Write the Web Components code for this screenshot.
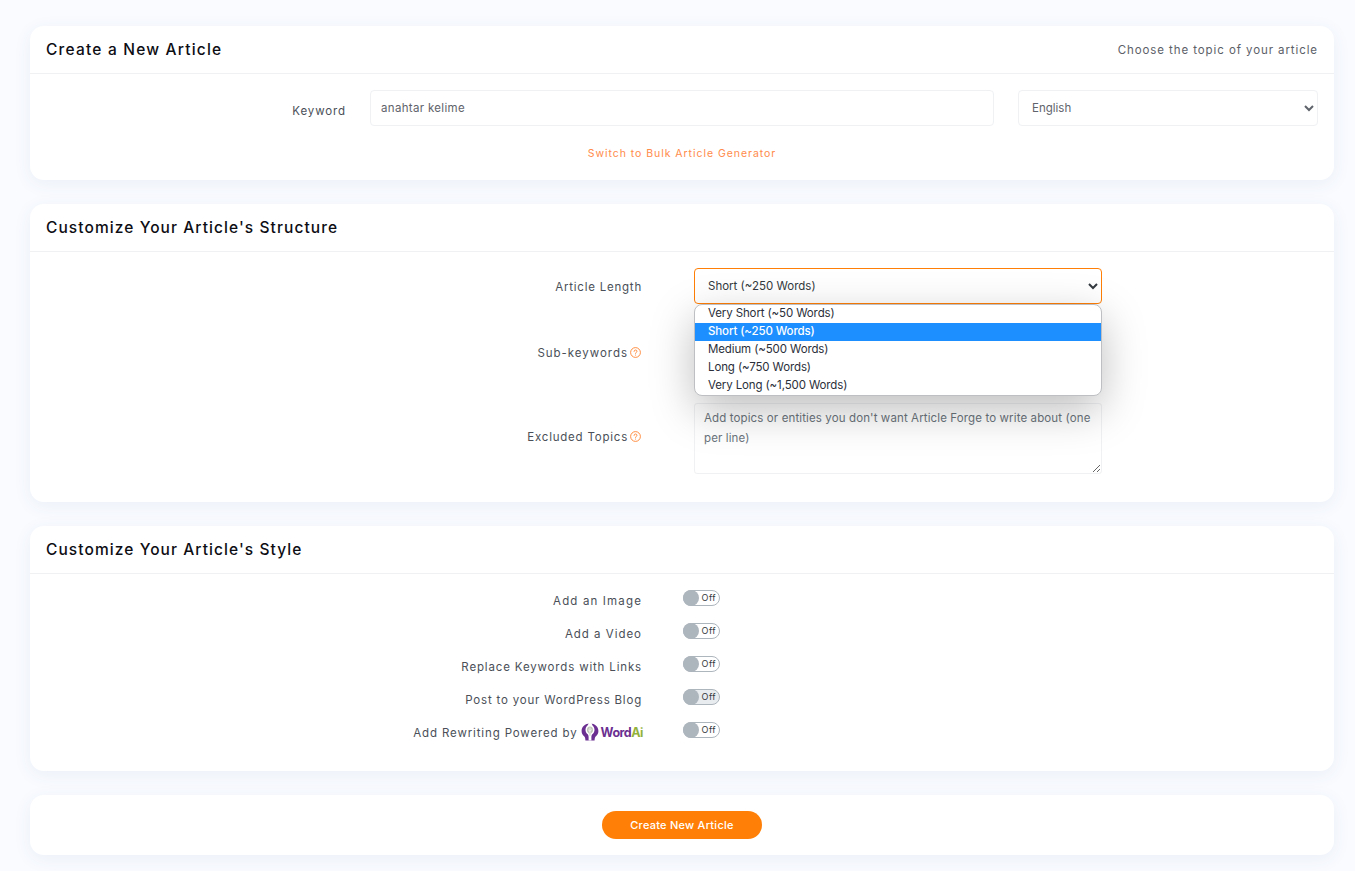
<!DOCTYPE html>
<html><head><meta charset="utf-8">
<style>
html,body{margin:0;padding:0;background:#f9fbff;}
body{font-family:"Inter","Open Sans",sans-serif;color:#343a40;height:871px;overflow:hidden;}
</style></head>
<body>
<template id="t-page"><style>
:host{display:flex;flex-direction:column;gap:24px;padding:26px 21px 0 30px;}
</style><slot></slot></template>

<template id="t-card"><style>
:host{display:block;background:#fff;border-radius:14px;box-shadow:0 4px 18px rgba(60,80,130,.07);position:relative;}
header{display:flex;justify-content:space-between;align-items:center;height:47px;padding:0 16px;border-bottom:1px solid #eff1f3;}
h2{margin:0;font:500 15.5px/20px "Inter",sans-serif;letter-spacing:var(--h-ls,1.08px);color:#0d0d14;}
.sub{font:400 11.5px/16px "Inter",sans-serif;letter-spacing:.91px;color:#5c6068;}
.sub:empty{display:none}
.body{padding:16px;}
</style><header><h2></h2><span class="sub"></span></header><div class="body"><slot></slot></div></template>

<template id="t-plain"><style>
:host{display:flex;justify-content:center;align-items:center;height:60px;background:#fff;border-radius:14px;box-shadow:0 4px 18px rgba(60,80,130,.07);}
</style><slot></slot></template>

<template id="t-keyword"><style>
:host{display:block;}
.row{display:grid;grid-template-columns:300px 624px 300px;column-gap:24px;}
label{font:400 11.5px/16px "Inter",sans-serif;letter-spacing:.88px;color:#4a4f58;text-align:right;align-self:center;padding-top:6px;}
input,select{box-sizing:border-box;height:36px;width:100%;border:1px solid #eff1f3;border-radius:4px;background:#fff;font:400 11.5px "Inter",sans-serif;color:#5f636b;outline:none;margin:0;}
input{padding:0 10px;letter-spacing:.32px}
select{padding:0 10px 0 9px;}
a{display:block;text-align:center;margin-top:20px;padding-bottom:2px;font:400 10.5px/16px "Inter",sans-serif;letter-spacing:.95px;color:#ff8b4a;text-decoration:none;}
</style><div class="row"><label>Keyword</label><input value="anahtar kelime" aria-label="Keyword"><select aria-label="Language"><option>English</option></select></div><a href="#">Switch to Bulk Article Generator</a></template>

<template id="t-field"><style>
:host{display:grid;grid-template-columns:596px 408px;column-gap:52px;align-items:center;}
.l{font:400 11.5px/16px "Inter",sans-serif;letter-spacing:var(--ls,.78px);color:#4a4f58;text-align:right;display:flex;justify-content:flex-end;align-items:center;gap:2px;padding-bottom:var(--lab-b,0);padding-top:var(--lab-t,0);white-space:nowrap;}
svg{width:11px;height:11px;margin-right:1px;flex:none;display:none}
:host([help]) svg{display:block}
</style><div class="l"><span class="t"></span><svg viewBox="0 0 20 20" fill="none" stroke="#ff7f2a" stroke-width="1.6"><circle cx="10" cy="10" r="8.9"/><path d="M7.4 8c0-1.5 1.2-2.5 2.700-2.500 1.500 0 2.600 1 2.600 2.300 0 1.900-2.700 1.900-2.700 3.900" stroke-linecap="round"/><path d="M10 14.400v.3" stroke-linecap="round" stroke-width="1.900"/></svg></div><div><slot></slot></div></template>

<template id="t-structure"><style>
:host{display:flex;flex-direction:column;gap:15px;position:relative;padding-bottom:12px;}
select,textarea{display:block;box-sizing:border-box;width:408px;margin:0;background:#fff;outline:none;font:400 11.5px/20px "Inter",sans-serif;color:#343a40;}
select{height:36px;border:1px solid #ff7f07;border-radius:4px;padding:0 10px 0 9px;}
textarea{height:71px;border:1px solid #eff1f3;border-radius:3px;padding:4px 9px;color:#6c757d;resize:vertical;letter-spacing:.12px;}
textarea::placeholder{color:#6c757d;opacity:1}
fld-row:nth-of-type(3){margin-top:-2px}
</style>
<fld-row label="Article Length" style="--lab-t:2px"><select aria-label="Article Length"><option>Very Short (~50 Words)</option><option selected>Short (~250 Words)</option><option>Medium (~500 Words)</option><option>Long (~750 Words)</option><option>Very Long (~1,500 Words)</option></select></fld-row>
<fld-row label="Sub-keywords" help style="--ls:.98px;--lab-b:4px"><textarea aria-label="Sub-keywords"></textarea></fld-row>
<fld-row label="Excluded Topics" help style="--lab-b:4px"><textarea aria-label="Excluded Topics" placeholder="Add topics or entities you don't want Article Forge to write about (one per line)"></textarea></fld-row>
<drop-menu></drop-menu></template>

<template id="t-menu"><style>
:host{position:absolute;left:648px;top:36px;width:408px;box-sizing:border-box;background:#fff;border:1px solid #bdbfc2;border-radius:8px;box-shadow:0 14px 44px rgba(0,0,0,.26);display:block;z-index:5;}
.w{overflow:hidden;border-radius:7px;}
div.o{height:18px;padding-left:13px;font:400 11.5px/17px "Inter",sans-serif;letter-spacing:-.12px;color:#2b2f3a;white-space:nowrap;}
div.s{background:#1e8fff;color:#fff;font-weight:500}
</style><div class="w"><div class="o">Very Short (~50 Words)</div><div class="o s">Short (~250 Words)</div><div class="o">Medium (~500 Words)</div><div class="o">Long (~750 Words)</div><div class="o">Very Long (~1,500 Words)</div></div></template>

<template id="t-toggle"><style>
:host{display:flex;align-items:center;height:17px;}
.l{width:596px;box-sizing:border-box;text-align:right;font:400 11.5px/16px "Inter",sans-serif;letter-spacing:var(--ls,.98px);color:#4a4f58;display:flex;justify-content:flex-end;align-items:center;padding-top:5px;white-space:nowrap;}
.sw{margin-left:41px;margin-top:-2px;box-sizing:border-box;width:37px;height:16px;border:1px solid #adb5bd;border-radius:8px;background:var(--sw-bg,#fff);position:relative;flex:none;}
.k{position:absolute;left:-1px;top:-1px;width:16px;height:16px;border-radius:50%;background:#adb5bd;}
.f{position:absolute;right:3px;top:0;font:400 9px/13px "Inter",sans-serif;letter-spacing:.4px;color:#343a40;}
</style><div class="l"><span class="t"></span><slot></slot></div><div class="sw"><div class="k"></div><div class="f">Off</div></div></template>

<template id="t-button"><style>
:host{display:block;}
button{display:block;width:160px;height:28px;border:0;border-radius:14px;background:#ff7f07;color:#fff;font:500 11px/28px "Inter",sans-serif;letter-spacing:.25px;padding:0;cursor:pointer;}
</style><button>Create New Article</button></template>

<template id="t-toggles"><style>
:host{display:flex;flex-direction:column;gap:16px;padding:0 0 16px;}
</style><slot></slot></template>

<af-page>
  <af-card heading="Create a New Article" sub="Choose the topic of your article" style="--h-ls:1.2px"><keyword-form></keyword-form></af-card>
  <af-card heading="Customize Your Article's Structure"><structure-form></structure-form></af-card>
  <af-card heading="Customize Your Article's Style"><toggle-list>
    <toggle-row label="Add an Image" style="--ls:1.15px"></toggle-row>
    <toggle-row label="Add a Video"></toggle-row>
    <toggle-row label="Replace Keywords with Links" style="--ls:.84px"></toggle-row>
    <toggle-row label="Post to your WordPress Blog" style="--sw-bg:#e9ecef;--ls:.8px"></toggle-row>
    <toggle-row label="Add Rewriting Powered by" style="--ls:.86px">
      <svg width="18" height="18" viewBox="0 0 18 18" style="margin-left:3px;margin-top:-3px;flex:none"><path d="M9 .4C4 .4.6 3.700.6 8c0 2.400 1 4 2.500 5.200 1 .8 1.300 2.200 1.300 4.400h9.200c0-2.200.3-3.600 1.300-4.400C16.400 12 17.400 10.400 17.400 8 17.400 3.700 14 .4 9 .4z" fill="#6b2f91"/><path d="M8 0h2.400l1.300 2.800c1.100.9 1.800 2.500 1.800 4.300 0 1.900-1 3.300-2.200 4.100-.6.500-.9 1.500-.9 3v3.400H7.600v-3.400c0-1.500-.3-2.500-.9-3C5.500 10.400 4.500 9 4.500 7.100c0-1.800.7-3.400 1.800-4.300z" fill="#fff"/><path d="M9 3.600c-2 0-3.100 1.700-3.100 3.500 0 1.500 1 2.500 1.800 3.100.5.400.7 1.100.7 2.400h1.200c0-1.300.2-2 .7-2.400.8-.6 1.800-1.600 1.800-3.100 0-1.800-1.100-3.500-3.100-3.500z" fill="#bfc5b8"/><path d="M9 4.500v7.500M7.200 6.800L9 8.300l1.800-1.900" stroke="#fff" stroke-width=".8" fill="none"/></svg>
      <word-ai></word-ai>
    </toggle-row>
  </toggle-list></af-card>
  <af-plain><af-button></af-button></af-plain>
</af-page>

<script>
function tpl(id){return document.getElementById(id).content.cloneNode(true);}
function def(name,id,init){customElements.define(name,class extends HTMLElement{constructor(){super();this.attachShadow({mode:"open"}).appendChild(tpl(id));if(init)init(this,this.shadowRoot);}});}
def("af-page","t-page");
def("af-card","t-card",(h,s)=>{s.querySelector("h2").textContent=h.getAttribute("heading")||"";s.querySelector(".sub").textContent=h.getAttribute("sub")||"";});
def("af-plain","t-plain");
def("keyword-form","t-keyword");
def("fld-row","t-field",(h,s)=>{s.querySelector(".t").textContent=h.getAttribute("label");});
def("structure-form","t-structure");
def("drop-menu","t-menu");
def("toggle-row","t-toggle",(h,s)=>{s.querySelector(".t").textContent=h.getAttribute("label");});
def("toggle-list","t-toggles");
def("af-button","t-button");
customElements.define("word-ai",class extends HTMLElement{constructor(){super();this.attachShadow({mode:"open"}).innerHTML='<style>:host{display:inline-block;font:700 12.5px/16px "Inter",sans-serif;letter-spacing:-.5px;margin-left:2px;margin-right:-1px}b{color:#6b2f91;font-weight:700}i{color:#93b23c;font-style:normal}</style><b>Word</b><i>Ai</i>';}});
</script>
</body></html>
